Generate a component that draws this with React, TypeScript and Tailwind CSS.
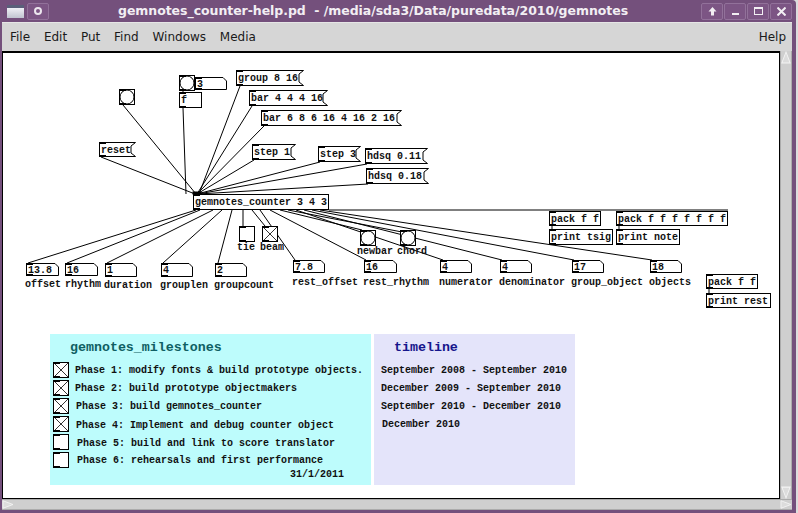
import React from "react";

const OX = 3;
const OY = 53;

// message boxes: x, y, right edge, bottom
const messages = [
  { text: "group 8 16", x: 236, y: 70, r: 304, b: 86 },
  { text: "bar 4 4 4 16", x: 249, y: 90, r: 328, b: 106 },
  { text: "bar 6 8 6 16 4 16 2 16", x: 261, y: 110, r: 402, b: 126 },
  { text: "reset", x: 99, y: 142, r: 136, b: 157 },
  { text: "step 1", x: 252, y: 144, r: 296, b: 160 },
  { text: "step 3", x: 318, y: 146, r: 361, b: 162 },
  { text: "hdsq 0.11", x: 365, y: 148, r: 428, b: 164 },
  { text: "hdsq 0.18", x: 366, y: 168, r: 429, b: 184 },
];

const objects = [
  { text: "f", x: 179, y: 92, r: 202, b: 108 },
  { text: "gemnotes_counter 3 4 3", x: 193, y: 194, r: 329, b: 210 },
  { text: "pack f f", x: 549, y: 211, r: 601, b: 226 },
  { text: "pack f f f f f f f", x: 616, y: 211, r: 728, b: 226 },
  { text: "print tsig", x: 549, y: 229, r: 613, b: 245 },
  { text: "print note", x: 616, y: 229, r: 680, b: 245 },
  { text: "pack f f", x: 706, y: 274, r: 758, b: 289 },
  { text: "print rest", x: 706, y: 293, r: 771, b: 308 },
];

const numbers = [
  { text: "3", x: 195, y: 77, r: 227, b: 90 },
  { text: "13.8", x: 26, y: 263, r: 59, b: 276 },
  { text: "16", x: 65, y: 263, r: 98, b: 276 },
  { text: "1", x: 105, y: 263, r: 137, b: 277 },
  { text: "4", x: 161, y: 263, r: 193, b: 277 },
  { text: "2", x: 215, y: 263, r: 247, b: 277 },
  { text: "7.8", x: 293, y: 260, r: 325, b: 273 },
  { text: "16", x: 364, y: 260, r: 397, b: 273 },
  { text: "4", x: 440, y: 260, r: 472, b: 273 },
  { text: "4", x: 500, y: 260, r: 532, b: 273 },
  { text: "17", x: 572, y: 260, r: 604, b: 273 },
  { text: "18", x: 650, y: 260, r: 682, b: 273 },
];

const bangs = [
  { x: 119, y: 89 },
  { x: 179, y: 75 },
  { x: 360, y: 230 },
  { x: 400, y: 230 },
];

const toggles = [
  { x: 239, y: 226, on: false },
  { x: 262, y: 226, on: true },
  { x: 53, y: 362, on: true },
  { x: 53, y: 380, on: true },
  { x: 53, y: 398, on: true },
  { x: 53, y: 416, on: true },
  { x: 53, y: 434, on: false },
  { x: 53, y: 452, on: false },
];

const labels = [
  { text: "tie", x: 237, y: 242 },
  { text: "beam", x: 260, y: 242 },
  { text: "newbar", x: 357, y: 246 },
  { text: "chord", x: 397, y: 246 },
  { text: "offset", x: 25, y: 279 },
  { text: "rhythm", x: 65, y: 279 },
  { text: "duration", x: 104, y: 280 },
  { text: "grouplen", x: 160, y: 280 },
  { text: "groupcount", x: 214, y: 280 },
  { text: "rest_offset", x: 292, y: 277 },
  { text: "rest_rhythm", x: 363, y: 277 },
  { text: "numerator", x: 439, y: 277 },
  { text: "denominator", x: 499, y: 277 },
  { text: "group_object", x: 571, y: 277 },
  { text: "objects", x: 649, y: 277 },
];

const wires = [
  [123, 105, 196, 194],
  [183, 108, 186, 194],
  [240, 86, 199, 194],
  [252, 106, 197, 194],
  [264, 126, 197, 194],
  [101, 157, 195, 194],
  [254, 160, 197, 194],
  [320, 162, 197, 194],
  [367, 164, 198, 194],
  [368, 184, 198, 194],
  [183, 91, 183, 92],
  [196, 210, 28, 263],
  [200, 210, 67, 263],
  [213, 210, 107, 263],
  [222, 210, 163, 263],
  [232, 210, 218, 263],
  [243, 210, 243, 226],
  [252, 210, 265, 226],
  [260, 210, 295, 260],
  [270, 210, 366, 260],
  [280, 210, 362, 230],
  [288, 210, 402, 232],
  [296, 210, 443, 260],
  [304, 210, 502, 260],
  [312, 210, 574, 260],
  [320, 210, 652, 260],
  [329, 210, 728, 210],
  [552, 226, 552, 229],
  [619, 226, 619, 229],
  [709, 289, 709, 293],
];

const phases = [
  { text: "Phase 1: modify fonts & build prototype objects.", x: 75, y: 365 },
  { text: "Phase 2: build prototype objectmakers", x: 75, y: 383 },
  { text: "Phase 3: build gemnotes_counter", x: 76, y: 401 },
  { text: "Phase 4: Implement and debug counter object", x: 76, y: 420 },
  { text: "Phase 5: build and link to score translator", x: 77, y: 438 },
  { text: "Phase 6: rehearsals and first performance", x: 77, y: 455 },
  { text: "31/1/2011", x: 290, y: 469 },
  { text: "September 2008 - September 2010", x: 381, y: 365 },
  { text: "December 2009 - September 2010", x: 381, y: 383 },
  { text: "September 2010 - December 2010", x: 381, y: 401 },
  { text: "December 2010", x: 382, y: 419 },
];

function PatchText({ text, x, y }: { text: string; x: number; y: number }) {
  return (
    <span
      className="absolute font-['Liberation_Mono',monospace] text-[10px] leading-3 font-bold whitespace-pre text-[#111]"
      style={{ left: x - OX, top: y - OY }}
    >
      {text}
    </span>
  );
}

function PatchDrawing() {
  return (
    <svg className="absolute inset-0" width="776" height="444" viewBox={`${OX} ${OY} 776 444`} fill="none" stroke="#000" strokeWidth="1">
      {wires.map(([x1, y1, x2, y2], i) => (
        <line key={i} x1={x1} y1={y1} x2={x2} y2={y2} />
      ))}
      <rect x="193" y="192" width="8" height="2" fill="#000" />
      {objects.map((o, i) => (
        <g key={i}>
          <rect x={o.x + 0.5} y={o.y + 0.5} width={o.r - o.x - 1} height={o.b - o.y - 1} fill="#fff" />
          <rect x={o.x} y={o.y} width="7" height="2" fill="#000" stroke="none" />
          <rect x={o.x} y={o.b - 2} width="7" height="2" fill="#000" stroke="none" />
        </g>
      ))}
      {messages.map((m, i) => (
        <g key={i}>
          <path
            d={`M${m.x + 0.5} ${m.y + 0.5}H${m.r - 0.5}L${m.r - 5} ${m.y + 4}V${m.b - 4}L${m.r - 0.5} ${m.b - 0.5}H${m.x + 0.5}Z`}
            fill="#fff"
          />
          <rect x={m.x} y={m.y} width="7" height="2" fill="#000" stroke="none" />
          <rect x={m.x} y={m.b - 2} width="7" height="2" fill="#000" stroke="none" />
        </g>
      ))}
      {numbers.map((n, i) => (
        <g key={i}>
          <path d={`M${n.x + 0.5} ${n.y + 0.5}H${n.r - 4}L${n.r - 0.5} ${n.y + 4}V${n.b - 0.5}H${n.x + 0.5}Z`} fill="#fff" />
          <rect x={n.x} y={n.y} width="7" height="2" fill="#000" stroke="none" />
          <rect x={n.x} y={n.b - 2} width="7" height="2" fill="#000" stroke="none" />
        </g>
      ))}
      {bangs.map((b, i) => (
        <g key={i}>
          <rect x={b.x + 0.5} y={b.y + 0.5} width="15" height="15" fill="#fff" />
          <circle cx={b.x + 8} cy={b.y + 8} r="7" />
          <rect x={b.x} y={b.y} width="7" height="2" fill="#000" stroke="none" />
          <rect x={b.x} y={b.y + 14} width="7" height="2" fill="#000" stroke="none" />
        </g>
      ))}
      {toggles.map((t, i) => (
        <g key={i}>
          <rect x={t.x + 0.5} y={t.y + 0.5} width="15" height="15" fill="#fff" />
          {t.on && <path d={`M${t.x} ${t.y}L${t.x + 16} ${t.y + 16}M${t.x + 16} ${t.y}L${t.x} ${t.y + 16}`} strokeWidth="0.8" />}
          <rect x={t.x} y={t.y} width="7" height="2" fill="#000" stroke="none" />
          <rect x={t.x} y={t.y + 14} width="7" height="2" fill="#000" stroke="none" />
        </g>
      ))}
    </svg>
  );
}

function Scrollbar({ vertical }: { vertical?: boolean }) {
  return (
    <div
      className={`flex shrink-0 justify-between bg-[#cfcfcf] ${
        vertical ? "w-[12px] flex-col border-x border-[#ababab]" : "h-[11px] border-y border-[#ababab]"
      }`}
    >
      <svg width={vertical ? 10 : 12} height={vertical ? 13 : 9} viewBox="0 0 12 12" preserveAspectRatio="none">
        {vertical ? (
          <path d="M6 1L11 11H1Z" fill="#dcdcdc" stroke="#f4f4f4" />
        ) : (
          <path d="M1 1L11 6L1 11Z" fill="#dcdcdc" stroke="#f4f4f4" />
        )}
      </svg>
      <svg width={vertical ? 10 : 12} height={vertical ? 13 : 9} viewBox="0 0 12 12" preserveAspectRatio="none">
        {vertical ? (
          <path d="M1 1H11L6 11Z" fill="#dcdcdc" stroke="#f4f4f4" />
        ) : (
          <path d="M1 1L11 6L1 11Z" fill="#dcdcdc" stroke="#f4f4f4" />
        )}
      </svg>
    </div>
  );
}

function TitleButton({ children, className }: { children: React.ReactNode; className?: string }) {
  return (
    <div className={`flex h-[17px] w-[22px] items-center justify-center rounded-[2px] border border-[#92719a] bg-[#7c5584] ${className ?? ""}`}>
      {children}
    </div>
  );
}

export default function App() {
  return (
    <div className="flex h-[513px] w-[798px] overflow-hidden bg-[#dcdcdc] font-['DejaVu_Sans',sans-serif]">
      <div className="flex w-[796px] flex-col rounded-tr-[4px] bg-[#74507c]">
        {/* title bar */}
        <div className="flex h-[22px] shrink-0 items-center pr-[1px] pl-[7px]">
          <div className="h-[13px] w-[17px] border-t-[3px] border-[#5a5f7a] bg-gradient-to-b from-[#f0f0f6] to-[#c0c4d0]" />
          <TitleButton className="ml-[3px]">
            <div className="h-[8px] w-[8px] rounded-full border-2 border-[#ece6ee] bg-[#7c5584]" />
          </TitleButton>
          <div className="flex-1 pl-[69px] text-[12.5px] font-bold tracking-[-0.05px] whitespace-pre text-[#f2eef3]">
            gemnotes_counter-help.pd  - /media/sda3/Data/puredata/2010/gemnotes
          </div>
          <div className="flex gap-[1px] pr-[3px]">
            <TitleButton>
              <svg width="9" height="9" viewBox="0 0 9 9" fill="#f2eef3"><path d="M4.5 0L8.5 4.5H6V8.5H3V4.5H.5Z" /></svg>
            </TitleButton>
            <TitleButton>
              <div className="mt-[6px] h-[2px] w-[7px] bg-[#f2eef3]" />
            </TitleButton>
            <TitleButton>
              <div className="h-[8px] w-[9px] border border-t-2 border-[#f2eef3]" />
            </TitleButton>
            <TitleButton>
              <svg width="9" height="9" viewBox="0 0 9 9" stroke="#f2eef3" strokeWidth="2"><path d="M.5 .5L8.5 8.5M8.5 .5L.5 8.5" /></svg>
            </TitleButton>
          </div>
        </div>

        {/* window body */}
        <div className="mr-[4px] mb-[3px] ml-[2px] flex min-h-0 flex-1 flex-col border-t border-[#e6e6e6] bg-[#d6d6d6]">
          <div className="flex h-[28px] shrink-0 items-center gap-[13.8px] pr-[6px] pl-[8px] text-[12px] text-[#1a1a1a]">
            <span>File</span>
            <span>Edit</span>
            <span>Put</span>
            <span>Find</span>
            <span>Windows</span>
            <span>Media</span>
            <span className="ml-auto">Help</span>
          </div>
          <div className="flex min-h-0 flex-1">
            <div className="relative min-w-0 flex-1 overflow-hidden border-t-2 border-r border-b border-l border-[#000] bg-white">
              {/* patch comment panels */}
              <div className="absolute top-[281px] left-[47px] h-[151px] w-[321px] bg-[#bdfcfc] pt-[4px] pl-[20px] font-['Liberation_Mono',monospace] text-[13.3px] font-bold text-[#0f5f63]">
                gemnotes_milestones
              </div>
              <div className="absolute top-[281px] left-[371px] h-[151px] w-[201px] bg-[#e4e4fa] pt-[4px] pl-[20px] font-['Liberation_Mono',monospace] text-[13.3px] font-bold text-[#16168c]">
                timeline
              </div>
              <PatchDrawing />
              {messages.map((m) => (
                <PatchText key={m.text} text={m.text} x={m.x + 2} y={m.y + 3} />
              ))}
              {objects.map((o, i) => (
                <PatchText key={i} text={o.text} x={o.x + 2} y={o.y + 3} />
              ))}
              {numbers.map((n, i) => (
                <PatchText key={i} text={n.text} x={n.x + 2} y={n.y + 2} />
              ))}
              {labels.map((l) => (
                <PatchText key={l.text} text={l.text} x={l.x} y={l.y} />
              ))}
              {phases.map((p) => (
                <PatchText key={p.text} text={p.text} x={p.x} y={p.y} />
              ))}
            </div>
            <Scrollbar vertical />
          </div>
          <Scrollbar />
        </div>
      </div>
    </div>
  );
}
